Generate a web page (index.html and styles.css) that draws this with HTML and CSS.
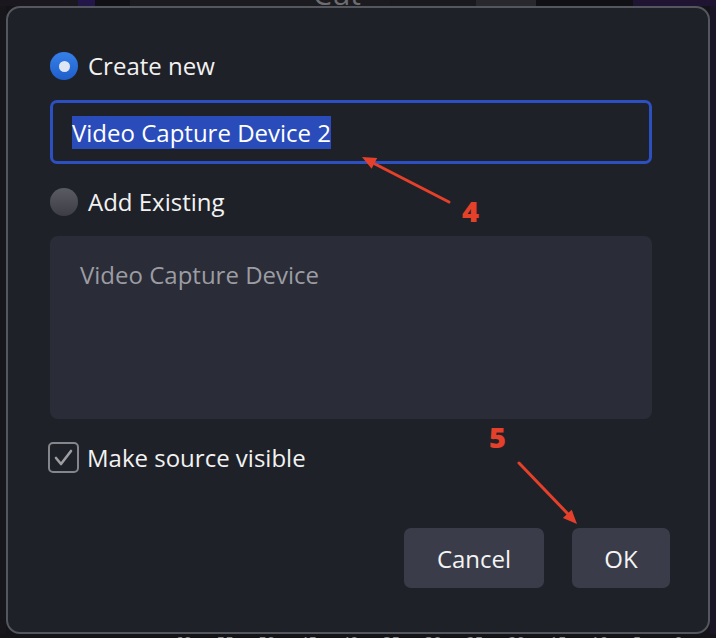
FILE: index.html
```html
<!DOCTYPE html>
<html>
<head>
<meta charset="utf-8">
<link rel="stylesheet" href="styles.css">
</head>
<body>
<div class="screen">
  <div class="top-strip">
    <span class="seg seg-a"></span>
    <span class="seg seg-purple"></span>
    <span class="seg seg-b"></span>
    <span class="seg seg-cut"><span class="cut-text">Cut</span></span>
    <span class="seg seg-c"></span>
    <span class="seg seg-d"></span>
    <span class="seg seg-e"></span>
    <span class="seg seg-violet"></span>
  </div>
  <div class="side-left"></div>
  <div class="dialog">
    <div class="radio-row">
      <span class="radio checked"><span class="dot"></span></span>
      <span class="label">Create new</span>
    </div>
    <div class="text-input"><span class="selected">Video Capture Device 2</span></div>
    <div class="radio-row row-existing">
      <span class="radio"></span>
      <span class="label">Add Existing</span>
    </div>
    <div class="list-box">
      <div class="list-item">Video Capture Device</div>
    </div>
    <div class="check-row">
      <span class="checkbox">
        <svg width="27" height="27" viewBox="0 0 27 27"><polyline points="6,14 11,20 21,7" fill="none" stroke="#9d9da2" stroke-width="2.6" stroke-linecap="round" stroke-linejoin="round"/></svg>
      </span>
      <span class="label">Make source visible</span>
    </div>
    <div class="button-row">
      <button class="btn btn-cancel">Cancel</button>
      <button class="btn btn-ok">OK</button>
    </div>
  </div>
  <div class="side-right"></div>
  <div class="bottom-strip">
    <span>60</span><span>55</span><span>50</span><span>45</span><span>40</span><span>35</span><span>30</span><span>25</span><span>20</span><span>15</span><span>10</span><span>5</span><span>0</span>
  </div>
</div>
<svg class="annotations" width="716" height="638" viewBox="0 0 716 638">
  <line x1="449" y1="202" x2="375" y2="164" stroke="#e4402a" stroke-width="3" stroke-linecap="round"/>
  <polygon points="362,157 377.2,158.1 371.6,168.7" fill="#e4402a"/>
  <line x1="519" y1="463" x2="568" y2="514" stroke="#e4402a" stroke-width="3" stroke-linecap="round"/>
  <polygon points="577,524 562.9,517.9 571.7,509.7" fill="#e4402a"/>
  <text x="462" y="222" class="num">4</text>
  <text x="489" y="448" class="num">5</text>
</svg>
</body>
</html>
```
FILE: styles.css
```css
* { box-sizing: border-box; }
html, body {
  margin: 0;
  padding: 0;
}
body {
  width: 716px;
  height: 638px;
  overflow: hidden;
  background: #141318;
  font-family: "Open Sans", "Noto Sans", sans-serif;
  position: relative;
}
.screen {
  display: grid;
  grid-template-columns: 6px 704px 6px;
  grid-template-rows: 6px 628px 4px;
  width: 716px;
  height: 638px;
}
.top-strip {
  grid-column: 1 / 4;
  display: flex;
  height: 6px;
  overflow: hidden;
}
.seg { display: block; height: 6px; }
.seg-a { width: 78px; background: #1a181e; }
.seg-purple { width: 17px; background: #23174a; }
.seg-b { width: 35px; background: #111014; }
.seg-cut { width: 260px; background: #1c1b20; position: relative; overflow: hidden; }
.cut-text {
  display: block;
  margin-left: 183px;
  margin-top: -21px;
  font-size: 30px;
  line-height: 30px;
  color: #6d6d72;
}
.seg-c { width: 86px; background: #1a191d; }
.seg-d { width: 60px; background: #29282d; }
.seg-e { width: 97px; background: #111014; }
.seg-violet { flex: 1; background: #1f1533; }
.side-left { background: #17161b; }
.side-right { background: #1b1626; }
.bottom-strip {
  grid-column: 1 / 4;
  display: flex;
  gap: 0;
  padding-left: 175px;
  height: 4px;
  overflow: hidden;
  font-size: 15px;
  line-height: 20px;
  color: #8c8c90;
}
.bottom-strip span {
  width: 42px;
  display: block;
  margin-top: -3px;
}
.dialog {
  border: 2px solid #55575f;
  border-radius: 14px;
  background: #1f2129;
  padding: 44px 56px 0 42px;
  display: flex;
  flex-direction: column;
  color: #f2f2f2;
}
.radio-row {
  display: flex;
  align-items: center;
  gap: 10px;
  height: 28px;
}
.row-existing { margin-top: 24px; }
.label {
  font-size: 24px;
  line-height: 28px;
  color: #f2f2f2;
}
.radio {
  width: 28px;
  height: 28px;
  border-radius: 50%;
  background: linear-gradient(#5b5c63, #3d3e45);
  display: flex;
  align-items: center;
  justify-content: center;
  flex: none;
}
.radio.checked {
  background: linear-gradient(#3680ea, #1f5fca);
}
.dot {
  width: 11px;
  height: 11px;
  border-radius: 50%;
  background: #dfe6f3;
}
.text-input {
  margin-top: 20px;
  height: 64px;
  border: 3px solid #2c4fc2;
  border-radius: 7px;
  padding-left: 19px;
  display: flex;
  align-items: center;
}
.selected {
  background: #2a4cbb;
  color: #ffffff;
  font-size: 24px;
  line-height: 33px;
}
.list-box {
  margin-top: 20px;
  height: 183px;
  background: #2a2c38;
  border-radius: 8px;
  padding: 22px 30px;
}
.list-item {
  font-size: 24px;
  line-height: 33px;
  color: #9c9da2;
}
.check-row {
  margin-top: 23px;
  display: flex;
  align-items: center;
  gap: 8px;
  height: 31px;
  margin-left: -2px;
}
.checkbox {
  width: 31px;
  height: 31px;
  border: 2px solid #85868c;
  border-radius: 5px;
  display: flex;
  align-items: center;
  justify-content: center;
  flex: none;
}
.button-row {
  margin-top: 55px;
  margin-right: -18px;
  display: flex;
  justify-content: flex-end;
  gap: 28px;
}
.btn {
  height: 60px;
  border: none;
  border-radius: 7px;
  background: #3a3d49;
  color: #f4f4f4;
  font-family: "Open Sans", "Noto Sans", sans-serif;
  font-size: 24px;
  padding: 0;
}
.btn-cancel { width: 140px; }
.btn-ok { width: 98px; }
.annotations {
  position: absolute;
  top: 0;
  left: 0;
  pointer-events: none;
}
.num {
  font-family: "Open Sans", sans-serif;
  font-weight: 800;
  font-size: 29px;
  fill: #e4402a;
}
```
